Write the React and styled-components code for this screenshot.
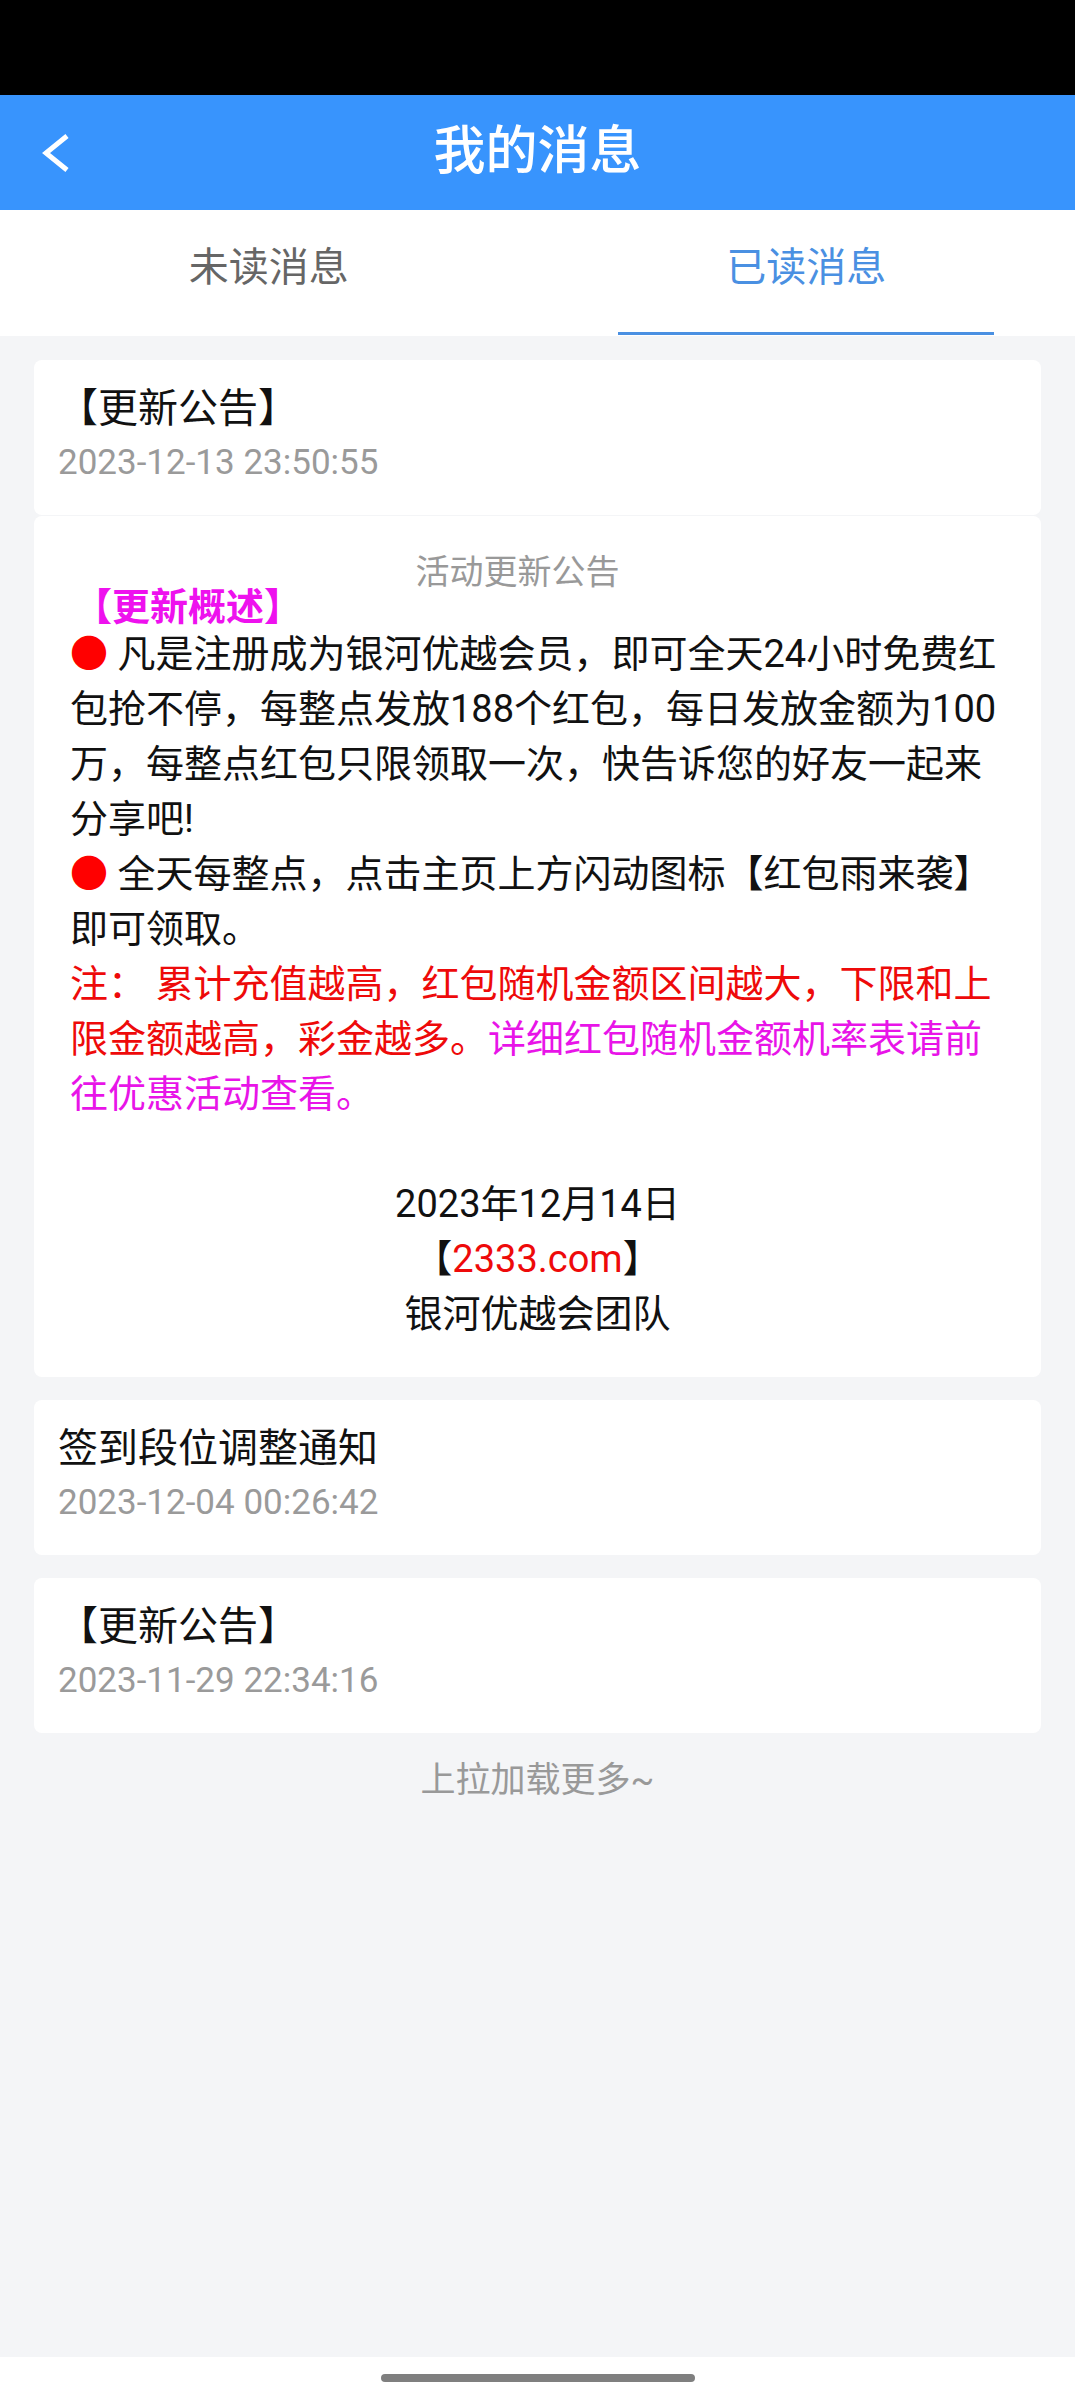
import React from 'react'
import styled, { createGlobalStyle } from 'styled-components'

const GlobalStyle = createGlobalStyle`
    * { box-sizing: border-box; }
    body {
        margin: 0;
        background: #ffffff;
        font-family: Roboto, "Noto Sans CJK SC", sans-serif;
        color: #111111;
    }
`

const messages = [
    { id: 1, title: '【更新公告】', time: '2023-12-13 23:50:55', open: true },
    { id: 2, title: '签到段位调整通知', time: '2023-12-04 00:26:42' },
    { id: 3, title: '【更新公告】', time: '2023-11-29 22:34:16' }
]

const App = () => {
    return (
        <>
            <GlobalStyle />
            <Page>
                <StatusBar />
                <Header>
                    <BackBtn aria-label="back">
                        <svg width="30" height="44" viewBox="0 0 30 44">
                            <polyline points="27,5 6,22 27,39" fill="none" stroke="#fff" strokeWidth="5" />
                        </svg>
                    </BackBtn>
                    <Title>我的消息</Title>
                    <span />
                </Header>
                <Tabs>
                    <Tab>
                        <TabLabel>未读消息</TabLabel>
                        <Underline />
                    </Tab>
                    <Tab active>
                        <TabLabel active>已读消息</TabLabel>
                        <Underline active />
                    </Tab>
                </Tabs>
                <Main>
                    <List>
                        {messages.map((msg) => (
                            <Group key={msg.id}>
                                <Card>
                                    <CardTitle>{msg.title}</CardTitle>
                                    <CardTime>{msg.time}</CardTime>
                                </Card>
                                {msg.open && (
                                    <Detail>
                                        <DetailHeading>活动更新公告</DetailHeading>
                                        <Label>【更新概述】</Label>
                                        <Body>
                                            <Para><Dot>●</Dot> 凡是注册成为银河优越会员，即可全天24小时免费红包抢不停，每整点发放188个红包，每日发放金额为100万，每整点红包只限领取一次，快告诉您的好友一起来分享吧!</Para>
                                            <Para><Dot>●</Dot> 全天每整点，点击主页上方闪动图标【红包雨来袭】即可领取。</Para>
                                            <Para>
                                                <Tone color="#ee0a0a">注： 累计充值越高，红包随机金额区间越大，下限和上限金额越高，彩金越多。</Tone>
                                                <Tone color="#e814e8">详细红包随机金额机率表请前往优惠活动查看。</Tone>
                                            </Para>
                                            <Blank />
                                            <Sign>2023年12月14日</Sign>
                                            <Sign>【<Tone color="#ee0a0a">2333.com</Tone>】</Sign>
                                            <Sign>银河优越会团队</Sign>
                                        </Body>
                                    </Detail>
                                )}
                            </Group>
                        ))}
                        <LoadMore>上拉加载更多~</LoadMore>
                    </List>
                </Main>
                <NavBar>
                    <HomeBar />
                </NavBar>
            </Page>
        </>
    )
}

export default App

const Page = styled.div`
    min-height: 2400px;
    display: flex;
    flex-direction: column;
`

const StatusBar = styled.div`
    height: 95px;
    background: #000;
`

const Header = styled.div`
    height: 115px;
    background: #3894fd;
    display: grid;
    grid-template-columns: 1fr auto 1fr;
    align-items: center;
`

const BackBtn = styled.div`
    justify-self: start;
    padding-left: 40px;
    display: flex;
    align-items: center;
`

const Title = styled.h1`
    margin: 0;
    color: #fff;
    font-size: 52px;
    font-weight: 500;
    line-height: 1.2;
`

const Tabs = styled.div`
    height: 126px;
    background: #fff;
    display: grid;
    grid-template-columns: 1fr 1fr;
`

const Tab = styled.div`
    display: flex;
    flex-direction: column;
    align-items: center;
    padding-top: 29px;
`

const TabLabel = styled.span`
    font-size: 40px;
    line-height: 58px;
    color: ${(p) => (p.active ? '#4a90e2' : '#666666')};
`

const Underline = styled.div`
    margin-top: auto;
    margin-bottom: 1px;
    width: 376px;
    height: 3px;
    background: ${(p) => (p.active ? '#4a90e2' : 'transparent')};
`

const Main = styled.div`
    flex: 1;
    background: #f4f5f7;
`

const List = styled.div`
    display: flex;
    flex-direction: column;
    gap: 23px;
    padding: 24px 34px;
`

const Group = styled.div`
    display: flex;
    flex-direction: column;
    gap: 1px;
`

const Card = styled.div`
    background: #fff;
    border-radius: 8px;
    padding: 20px 24px 27px;
`

const CardTitle = styled.div`
    font-size: 40px;
    line-height: 58px;
    color: #111;
`

const CardTime = styled.div`
    font-size: 35px;
    line-height: 50px;
    color: #9a9a9a;
`

const Detail = styled.div`
    background: #fff;
    border-radius: 8px;
    padding: 36px 36px 35px;
`

const DetailHeading = styled.div`
    text-align: center;
    padding-right: 40px;
    font-size: 34px;
    line-height: 40px;
    color: #999;
`

const Label = styled.div`
    margin-left: 4px;
    font-size: 38px;
    line-height: 30px;
    font-weight: 700;
    color: #ee11ee;
`

const Body = styled.div`
    margin-top: 5px;
    font-size: 38px;
    line-height: 55px;
    color: #111;
`

const Para = styled.p`
    margin: 0;
`

const Dot = styled.span`
    color: #ff0000;
`

const Tone = styled.span`
    color: ${(p) => p.color};
`

const Blank = styled.div`
    height: 55px;
`

const Sign = styled.div`
    text-align: center;
`

const LoadMore = styled.div`
    text-align: center;
    font-size: 35px;
    line-height: 50px;
    color: #999;
`

const NavBar = styled.div`
    height: 43px;
    background: #fff;
    display: flex;
    justify-content: center;
    padding-top: 17px;
`

const HomeBar = styled.div`
    width: 314px;
    height: 8px;
    border-radius: 4px;
    background: #7f7f7f;
`
